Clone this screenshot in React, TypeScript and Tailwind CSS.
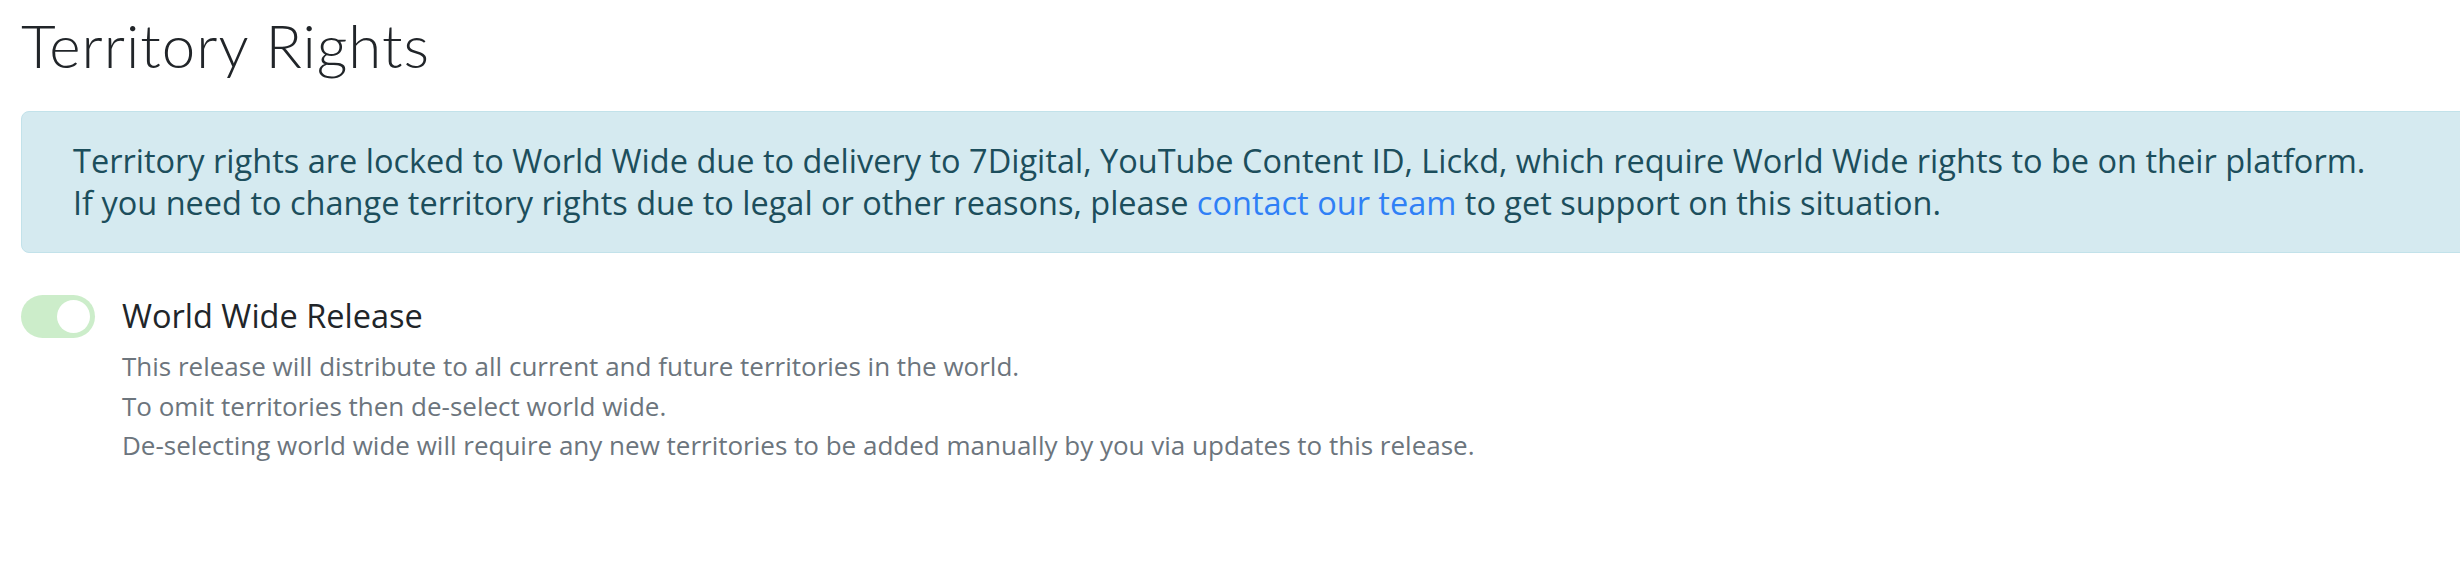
import React, { useState } from "react";

export default function App() {
  const [worldWide, setWorldWide] = useState(true);

  return (
    <div className="min-h-[568px] w-full overflow-hidden bg-white pl-[21px] font-['Open_Sans',sans-serif]">
      <h1 className="pt-[9px] font-['Lato',sans-serif] text-[60px] font-light leading-[72px] tracking-[1px] text-[#212529]">
        Territory Rights
      </h1>

      <div className="mt-[30px] w-[2500px] rounded-[8px] border border-[#c2e2ea] bg-[#d5eaf0] px-[51px] pb-[29px] pt-[28px] text-[32.5px] leading-[41.5px] text-[#1c4e5c]">
        <p>
          Territory rights are locked to World Wide due to delivery to 7Digital, YouTube Content ID, Lickd, which require
          World Wide rights to be on their platform.
        </p>
        <p>
          If you need to change territory rights due to legal or other reasons, please{" "}
          <a href="#" className="text-[#2f80f6]">
            contact our team
          </a>{" "}
          to get support on this situation.
        </p>
      </div>

      <div className="mt-[42px] flex items-start gap-[27px]">
        <button
          onClick={() => setWorldWide(!worldWide)}
          className="flex h-[43px] w-[74px] shrink-0 items-center justify-end rounded-full bg-[#ccedca] px-[5px]"
          aria-label="World Wide Release"
        >
          <span className="block h-[33px] w-[33px] rounded-full bg-white" />
        </button>
        <div>
          <div className="text-[32.5px] leading-[42px] text-[#212529]">World Wide Release</div>
          <div className="mt-[10px] text-[26px] leading-[39.5px] text-[#6c757d]">
            <p>This release will distribute to all current and future territories in the world.</p>
            <p>To omit territories then de-select world wide.</p>
            <p>De-selecting world wide will require any new territories to be added manually by you via updates to this release.</p>
          </div>
        </div>
      </div>
    </div>
  );
}
